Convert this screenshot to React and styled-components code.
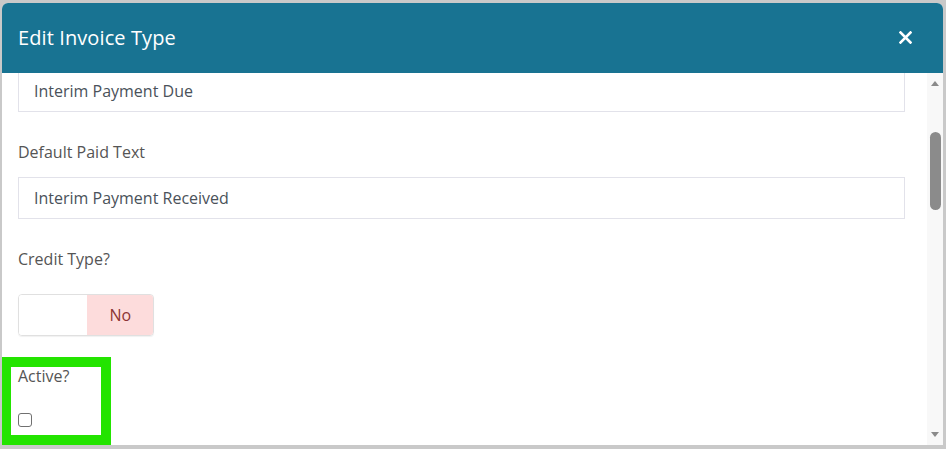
import React from "react";
import styled, { createGlobalStyle } from "styled-components";

const GlobalStyle = createGlobalStyle`
  html, body {
    margin: 0;
    padding: 0;
    background: #c9c9c9;
    font-family: "Open Sans", "Noto Sans", sans-serif;
  }
`;

const Page = styled.div`
  width: 946px;
  height: 449px;
  padding: 3px 3px 0 2px;
  box-sizing: border-box;
  overflow: hidden;
`;

const Modal = styled.div`
  height: 442px;
  display: flex;
  flex-direction: column;
  background: #fff;
  border-radius: 6px 6px 0 0;
  overflow: hidden;
`;

const Header = styled.div`
  height: 70px;
  flex: none;
  display: flex;
  align-items: center;
  justify-content: space-between;
  padding: 0 31px 1px 16px;
  box-sizing: border-box;
  background: #187392;
  color: #fff;
`;

const Title = styled.h2`
  margin: 0;
  font-size: 20px;
  font-weight: 500;
  letter-spacing: 0.1px;
`;

const Close = styled.button`
  border: none;
  background: none;
  padding: 0;
  display: flex;
  cursor: pointer;
`;

const BodyRow = styled.div`
  flex: 1;
  display: flex;
  min-height: 0;
`;

const Content = styled.div`
  flex: 1;
  overflow: hidden;
  padding: 0 22px 0 16px;
`;

const Scrolled = styled.div`
  margin-top: ${({ $offset }) => -$offset}px;
  display: flex;
  flex-direction: column;
`;

const Label = styled.div`
  font-size: 16px;
  line-height: 24px;
  color: #555;
  margin: ${({ $m }) => $m || "0"};
`;

const Input = styled.div`
  height: 42px;
  box-sizing: border-box;
  border: 1px solid #e2e2ea;
  display: flex;
  align-items: center;
  padding: 0 15px;
  font-size: 16px;
  color: #4a525a;
`;

const Toggle = styled.div`
  width: 136px;
  height: 42px;
  box-sizing: border-box;
  display: flex;
  border: 1px solid #e0e0e0;
  border-radius: 4px;
  overflow: hidden;
  margin-top: 23px;
  box-shadow: 0 1px 1px rgba(0, 0, 0, 0.06);
`;

const ToggleSide = styled.div`
  flex: ${({ $grow }) => $grow};
  display: flex;
  align-items: center;
  justify-content: center;
  font-size: 16px;
  background: ${({ $bg }) => $bg};
  color: ${({ $fg }) => $fg};
`;

const Highlight = styled.div`
  width: 110px;
  height: 88px;
  box-sizing: border-box;
  margin: 21px 0 0 -17px;
  border: 10px solid #23e400;
  padding: 0 7px;
  display: flex;
  flex-direction: column;
`;

const Checkbox = styled.span`
  width: 14px;
  height: 14px;
  box-sizing: border-box;
  border: 1px solid #707070;
  border-radius: 3px;
  margin-top: 25px;
  background: #fff;
`;

const Scrollbar = styled.div`
  width: 16px;
  flex: none;
  background: #f8f8f8;
  display: flex;
  flex-direction: column;
  align-items: center;
`;

const Arrow = styled.span`
  width: 0;
  height: 0;
  border-left: 4px solid transparent;
  border-right: 4px solid transparent;
  ${({ $down }) =>
    $down
      ? "border-top: 5px solid #8a8a8a; margin-top: auto; margin-bottom: 8px;"
      : "border-bottom: 5px solid #8a8a8a; margin-top: 8px;"}
`;

const Thumb = styled.div`
  width: 11px;
  height: 78px;
  border-radius: 6px;
  background: #8b8b8b;
  margin-top: 46px;
`;

export default function App() {
  return (
    <>
      <GlobalStyle />
      <Page>
        <Modal>
          <Header>
            <Title>Edit Invoice Type</Title>
            <Close aria-label="Close">
              <svg width="13" height="13" viewBox="0 0 13 13">
                <path d="M1.5 1.5 L11.5 11.5 M11.5 1.5 L1.5 11.5" stroke="#fff" strokeWidth="2.6" strokeLinecap="square" />
              </svg>
            </Close>
          </Header>
          <BodyRow>
            <Content>
              <Scrolled $offset={3}>
                <Input>Interim Payment Due</Input>
                <Label $m="28px 0 13px">Default Paid Text</Label>
                <Input>Interim Payment Received</Input>
                <Label $m="28px 0 0">Credit Type?</Label>
                <Toggle>
                  <ToggleSide $grow={69} $bg="#fff" />
                  <ToggleSide $grow={66} $bg="#fddcdc" $fg="#8c3434">No</ToggleSide>
                </Toggle>
                <Highlight>
                  <Label $m="-3px 0 0">Active?</Label>
                  <Checkbox />
                </Highlight>
              </Scrolled>
            </Content>
            <Scrollbar>
              <Arrow />
              <Thumb />
              <Arrow $down />
            </Scrollbar>
          </BodyRow>
        </Modal>
      </Page>
    </>
  );
}
